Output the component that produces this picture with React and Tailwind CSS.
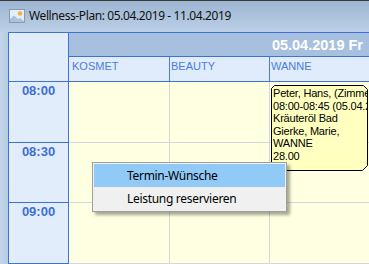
import React from "react";

function PicIcon() {
  return (
    <svg width="16" height="14" viewBox="0 0 16 14" className="shrink-0">
      <rect x="0.5" y="0.5" width="15" height="13" fill="#f4f8fc" stroke="#8a9bb0" />
      <rect x="1" y="1" width="14" height="12" fill="#e4eef8" />
      <circle cx="11" cy="4.5" r="2.2" fill="#f3b233" />
      <path d="M1 13 L1 10 L5 6.5 L9 10 L11 9 L15 12 L15 13 Z" fill="#a9c3de" />
    </svg>
  );
}

export default function App() {
  const sans = { fontFamily: '"Noto Sans", "Open Sans", sans-serif' };
  const arial = { fontFamily: '"Liberation Sans", Arial, sans-serif' };
  const times = ["08:00", "08:30", "09:00"];
  const heights = ["h-[61px]", "h-[60px]", "h-[61px]"];
  return (
    <div className="relative w-[369px] h-[264px] overflow-hidden bg-[#bacfe7] flex flex-col">
      {/* title bar */}
      <div className="h-[32px] shrink-0 border-t border-[#3a3a3a] bg-gradient-to-b from-[#9cb5d1] to-[#bcd0e7] flex items-center pl-[9px] pb-[1px]">
        <PicIcon />
        <span className="ml-[4px] text-[12px] leading-[16px] text-[#111] tracking-[-0.4px]" style={sans}>
          Wellness-Plan: 05.04.2019 - 11.04.2019
        </span>
      </div>
      {/* body */}
      <div className="flex flex-1 min-h-0">
        <div className="w-[8px] shrink-0 bg-gradient-to-r from-[#c4d6ec] to-[#b6cbe4]" />
        <div className="flex-1 flex flex-col border-l border-t border-[#3f72d6]" style={arial}>
          {/* header */}
          <div className="flex shrink-0">
            <div className="w-[60px] h-[49px] shrink-0 bg-[#e2edfc] border-r border-b border-[#3f72d6]" />
            <div className="flex-1 flex flex-col">
              <div className="h-[24px] bg-[#a8c0e0] border-b border-[#3f72d6] flex justify-end pr-[6px] pt-[4px]">
                <span className="text-[14.5px] leading-[16px] font-bold text-white">05.04.2019 Fr</span>
              </div>
              <div className="h-[25px] flex bg-[#e0ebfc] border-b border-[#3f72d6] text-[11px] leading-[13px] text-[#4a7ed9]">
                <div className="w-[101px] border-r border-[#4a7ed9] pl-[3px] pt-[3px]">KOSMET</div>
                <div className="w-[100px] border-r border-[#4a7ed9] pl-[1px] pt-[3px]">BEAUTY</div>
                <div className="flex-1 pl-[1px] pt-[3px]">WANNE</div>
              </div>
            </div>
          </div>
          {/* rows */}
          {times.map((t, i) => (
            <div key={t} className={"flex shrink-0 " + heights[i]}>
              <div className="w-[60px] shrink-0 bg-[#e2edfc] border-r border-b border-[#3f72d6] flex justify-center pt-[1px]">
                <span className="text-[13px] leading-[15px] font-bold text-[#3d6fd2]">{t}</span>
              </div>
              <div className="flex-1 flex bg-[#ffffe1] border-b border-[#d6d6de]">
                <div className="w-[101px] border-r border-[#d6d6de]" />
                <div className="w-[100px] border-r border-[#d6d6de]" />
                <div className="flex-1" />
              </div>
            </div>
          ))}
        </div>
      </div>

      {/* appointment */}
      <div className="absolute left-[271px] top-[85px] w-[97px] h-[86px]">
        <svg className="absolute inset-0" width="97" height="86" viewBox="0 0 97 86">
          <polygon
            points="3.5,0.5 92.5,0.5 96.5,4.5 96.5,80.5 91.5,85.5 0.5,85.5 0.5,3.5"
            fill="#ffffc0"
            stroke="#000"
          />
        </svg>
        <div
          className="relative pl-[2px] pt-[2px] pr-[1px] text-[11px] leading-[12.5px] text-black whitespace-nowrap overflow-hidden tracking-[-0.2px] h-[84px]"
          style={arial}
        >
          <div>Peter, Hans, (Zimmer</div>
          <div>08:00-08:45 (05.04.2019)</div>
          <div>Kräuteröl Bad</div>
          <div>Gierke, Marie,</div>
          <div>WANNE</div>
          <div>28.00</div>
        </div>
      </div>

      {/* context menu */}
      <div
        className="absolute left-[92px] top-[162px] w-[195px] h-[50px] bg-[#f0f0f0] border border-[#a0a0a0] p-[1px] shadow-[3px_3px_3px_rgba(0,0,0,0.35)]"
        style={sans}
      >
        <div className="h-[23px] bg-[#91c9f7] flex items-center pl-[33px] text-[12px] leading-[16px] text-black tracking-[-0.3px]">
          Termin-Wünsche
        </div>
        <div className="h-[23px] flex items-center pl-[33px] text-[12px] leading-[16px] text-black tracking-[-0.3px]">
          Leistung reservieren
        </div>
      </div>
    </div>
  );
}
